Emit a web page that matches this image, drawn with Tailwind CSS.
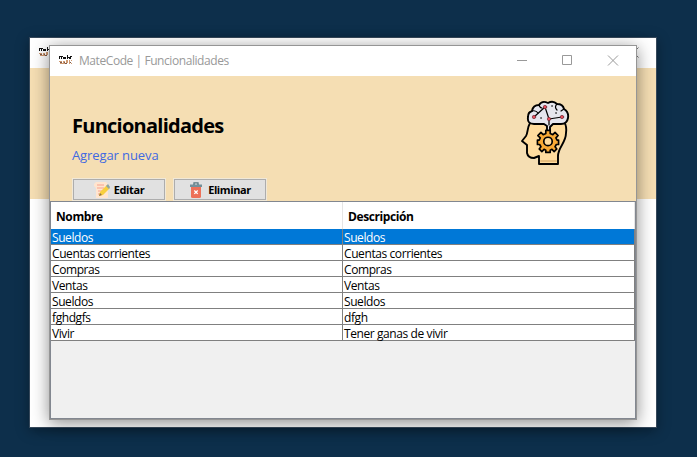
<!DOCTYPE html>
<html lang="es">
<head>
<meta charset="utf-8">
<title>MateCode | Funcionalidades</title>
<script src="https://cdn.jsdelivr.net/npm/@tailwindcss/browser@4"></script>
</head>
<body class="relative h-[457px] w-[697px] overflow-hidden bg-[#0d2f4b] font-['Open_Sans',sans-serif] text-black">
<svg class="hidden">
  <symbol id="mate" viewBox="0 0 14 12">
    <path d="M0 2h1v3H0zM1 2h3v1H1zM2 3h1v2H2zM4 3h1v2H4zM5 3h2v2H5zM8 1h1v4H8zM9 3h1v1H9zM11 2h2v1h-2zM10 3h2v2h-2z" fill="#111"/>
    <path d="M0 7h3v1H0zM1 9h3v1H1zM4 7h2v3H4zM7 6h2v3H7zM10 6h1v4h-1zM12 6h1v1h-1zM12 9h1v1h-1z" fill="#cf9a72"/>
    <path d="M1 8h2v1H1zM5 8h1v1H5zM6 9h2v1H6zM11 8h1v1h-1z" fill="#7c5948"/>
  </symbol>
</svg>

<!-- Parent window -->
<section class="absolute left-[29px] top-[37px] flex h-[391px] w-[628px] flex-col overflow-hidden border border-[#36485a] bg-white shadow-[0_3px_12px_rgba(0,0,0,0.35)]">
  <header class="flex h-[30px] shrink-0 items-center justify-between pl-[9px] pr-[17px]">
    <svg class="mt-[-3px] h-3 w-3.5" viewBox="0 0 14 12"><use href="#mate"/></svg>
    <svg class="mt-[-2px] h-[11px] w-[11px]" viewBox="0 0 11 11" stroke="#777"><path d="M.5.5l10 10M10.500.5l-10 10"/></svg>
  </header>
  <div class="h-[131px] shrink-0 bg-[#f5deb3]"></div>
</section>

<!-- Active dialog -->
<section class="absolute left-[49px] top-[45px] flex h-[375px] w-[588px] flex-col border border-[#959595] bg-white shadow-[0_3px_16px_rgba(0,0,0,0.45)]">
  <header class="flex h-[30px] shrink-0 items-center pl-[9px]">
    <svg class="mt-[-2px] h-3 w-3.5" viewBox="0 0 14 12"><use href="#mate"/></svg>
    <h1 class="ml-1.5 flex-1 whitespace-nowrap text-[12px] leading-[30px] tracking-[-0.43px] text-[#999]">MateCode | Funcionalidades</h1>
    <svg class="mr-[17px] mt-[-1px] h-[11px] w-[103px]" viewBox="0 0 103 11" fill="none" stroke="#999"><path d="M1 5.500h10M46.500.5h9v9h-9zM92 .5l10 10M102 .5l-10 10"/></svg>
  </header>

  <div class="flex h-[125px] shrink-0 justify-between bg-[#f5deb3] pl-[22px] pr-[64px]">
    <div class="flex flex-col">
      <h2 class="mt-[36px] h-7 whitespace-nowrap text-[20px] font-bold leading-7 tracking-[-0.74px]">Funcionalidades</h2>
      <a class="mt-[5px] h-5 whitespace-nowrap text-[13px] leading-5 tracking-[-0.1px] text-[#4169e1]">Agregar nueva</a>
      <div class="mt-[13px] flex gap-[7px]">
        <button class="flex h-[23px] w-[94px] items-center justify-center border border-[#f0e8d8] bg-[#e1e1e1] p-0 text-[11px] font-bold shadow-[inset_0_0_0_1px_#adadad]">
          <svg class="mr-1 h-4 w-4" viewBox="0 0 16 16"><path d="M2 0h10l2 2v14H2V6L0 4V2z" fill="#ffe5cf"/><path d="M3 3h7M3 6h7M4 9h5M4 12h3" stroke="#f8a18d"/><path d="M5 14l1-4 7-7 3 3-7 7z" fill="#f8cf3e"/><path d="M12 4l2-2 2 3-1 2z" fill="#8da5a5"/><path d="M5 14l1-3 2 2z" fill="#917246"/></svg>
          <span class="pt-[2px] tracking-[-0.4px]">Editar</span>
        </button>
        <button class="flex h-[23px] w-[94px] items-center justify-center border border-[#f0e8d8] bg-[#e1e1e1] p-0 text-[11px] font-bold shadow-[inset_0_0_0_1px_#adadad]">
          <svg class="mr-[5px] h-4 w-3.5" viewBox="1 0 14 16"><path d="M3 5h10v9.500Q13 16 11.500 16h-7Q3 16 3 14.500z" fill="#ed7058"/><path d="M2 2.500h12V5H2z" fill="#73909a"/><path d="M6 3V.8h4V3" fill="none" stroke="#58777f" stroke-width="1.300"/><path d="M6.300 8.500l3.400 3.400M9.700 8.500l-3.400 3.400" stroke="#fff" stroke-width="1.300"/></svg>
          <span class="pt-[2px] tracking-[-0.4px]">Eliminar</span>
        </button>
      </div>
    </div>
    <svg class="mt-[23px] h-[68px] w-[52px]" viewBox="0 0 52 68" fill="none" stroke="#000" stroke-width="1.900" stroke-linejoin="round" stroke-linecap="round">
      <path d="M10 24C7 29 8 34 6 37L2 42L7 46V54Q8 59 14 59L19 57V65H38V57C38 48 46 44 46 34Q47 27 44 23z" fill="#ffdc9e"/>
      <path d="M21 62H36" stroke="#e7bd7d"/>
      <path d="M27 31V27L24 25H14Q7 25 8 18Q8 13 12 12Q13 6 19 6Q22 1 28 4Q33 1 37 5Q43 5 44 10Q49 13 48 19Q47 25 41 25H33L30 28V31" fill="#e6e6ee"/>
      <path d="M19 6Q20 9 22 9M12 12Q16 11 18 14M37 5Q34 8 37 11M44 10L41 12" stroke-width="1.200"/>
      <path d="M14 18L25 8L29 20L42 18M29 20V26" stroke-width="1.200"/>
      <g fill="#e94d5b" stroke="#712c38" stroke-width=".7"><circle cx="14" cy="18" r="1.700"/><circle cx="25" cy="8" r="1.700"/><circle cx="29" cy="20" r="1.700"/><circle cx="42" cy="18" r="1.700"/></g>
      <path d="M21 19h.1M36 14h.1M32 7h.1" stroke-width="1.600"/>
      <g transform="translate(28 42) scale(.88)">
        <path d="M-2.500-12h5v3.500l3 1.300 2.500-2.500 3.500 3.500L9-3.500l1.300 2.500H12v5H9.500L8 6.500 10 9 7 12 4.500 9.500 2.500 10.500V13h-5v-2.500l-2-1L-7 12-10 9l2-2.500L-9.500 4H-12v-5h2l1.200-2.500-2.700-2.700L-8-9.700l2.500 2.500 3-1.300z" fill="#f9aa35"/>
        <circle r="4.800" cy=".5" fill="#ffdc9e"/>
      </g>
    </svg>
  </div>

  <div class="h-[218px] border border-[#828790] bg-[#f0f0f0]">
    <table class="w-[584px] table-fixed border-separate border-spacing-0 bg-white text-[12px] leading-[13px]">
      <thead>
        <tr class="h-[27px] text-left tracking-[-0.4px]">
          <th class="w-[292px] border-r border-[#e5e5e5] p-0 pl-[5px] pt-0.5">Nombre</th>
          <th class="border-r border-[#e5e5e5] p-0 pl-[5px] pt-0.5">Descripción</th>
        </tr>
      </thead>
      <tbody class="tracking-[-0.41px] [&_td]:h-4 [&_td]:whitespace-nowrap [&_td]:border-b [&_td]:border-r [&_td]:border-[#808080] [&_td]:p-0 [&_td]:pl-px [&_td]:pt-0.5">
        <tr class="bg-[#0078d7] text-white"><td>Sueldos</td><td>Sueldos</td></tr>
        <tr><td>Cuentas corrientes</td><td>Cuentas corrientes</td></tr>
        <tr><td>Compras</td><td>Compras</td></tr>
        <tr><td>Ventas</td><td>Ventas</td></tr>
        <tr><td>Sueldos</td><td>Sueldos</td></tr>
        <tr><td>fghdgfs</td><td>dfgh</td></tr>
        <tr><td>Vivir</td><td>Tener ganas de vivir</td></tr>
      </tbody>
    </table>
  </div>
</section>
</body>
</html>
